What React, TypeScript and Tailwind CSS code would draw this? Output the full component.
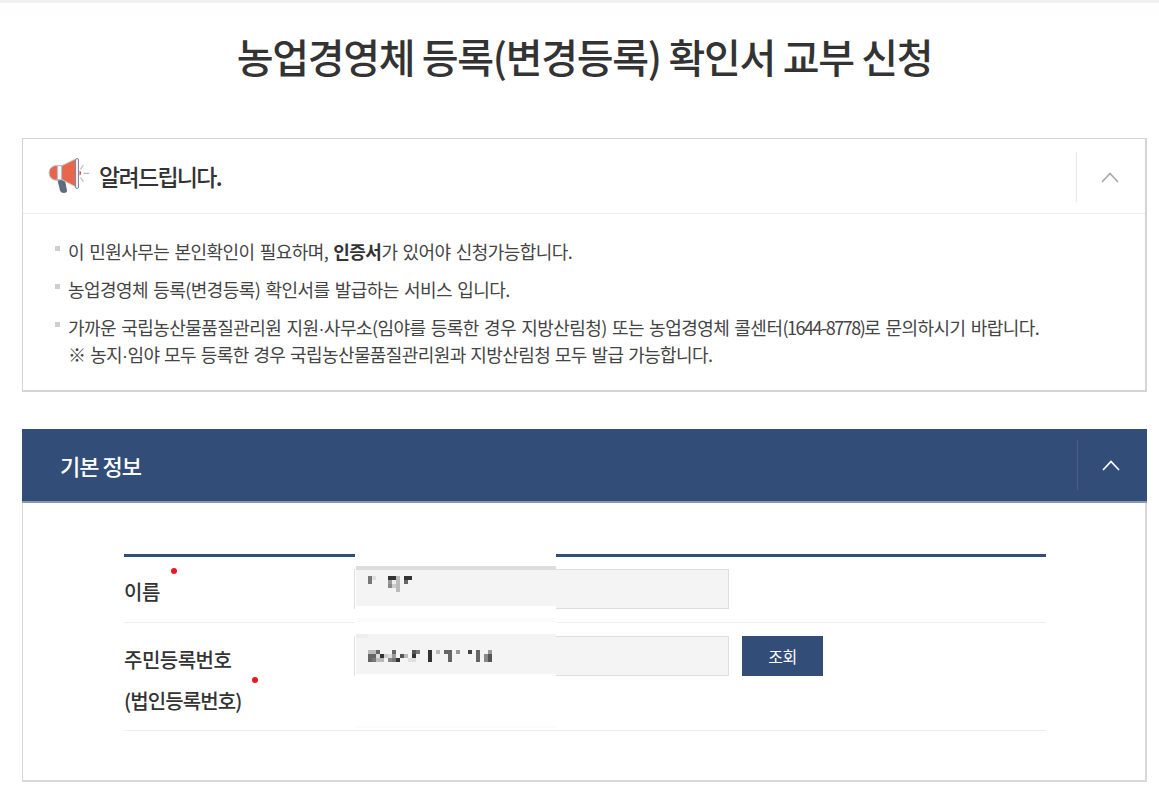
const kr = "font-['Noto_Sans_CJK_KR','Noto_Sans',sans-serif]";

// mosaic (blurred personal data): [x, y, colour], cells are 4px
const nameCells: [number, number, string][] = [
  [0, 0, "#777"], [0, 1, "#777"], [1, 0, "#e0e0e0"],
  [5, 0, "#333"], [6, 0, "#333"], [7, 0, "#bbb"], [7, 1, "#bbb"], [7, 2, "#bbb"], [7, 3, "#bbb"],
  [5, 1, "#999"], [6, 1, "#eee"], [5, 2, "#888"], [6, 2, "#ccc"],
  [9, 0, "#333"], [10, 0, "#333"], [9, 1, "#666"],
];

const idColumns: [number, (string | null)[]][] = [
  [0, ["#bbb", "#666", "#666"]],
  [1, ["#bbb", "#666", "#777"]],
  [2, ["#666", "#ddd", "#bbb"]],
  [3, [null, "#333", "#bbb"]],
  [4, [null, "#ccc", null]],
  [5, [null, "#ddd", "#888"]],
  [6, ["#666", "#999", "#777"]],
  [7, [null, null, "#333"]],
  [8, [null, "#555", null]],
  [9, [null, "#bbb", null]],
  [10, [null, null, "#e0e0e0"]],
  [11, ["#555", "#333", "#e0e0e0"]],
  [12, ["#777", null, null]],
  [15, ["#333", "#333", "#333"]],
  [17, ["#bbb", null, null]],
  [19, ["#666", null, null]],
  [20, ["#666", "#666", "#666"]],
  [22, ["#999", null, null]],
  [25, ["#444", null, null]],
  [27, ["#666", "#666", "#666"]],
  [29, [null, "#888", "#888"]],
  [30, ["#999", "#555", "#555"]],
];

const Megaphone = () => (
  <svg width="42" height="36" viewBox="0 0 42 36" className="shrink-0">
    <path d="M9.500 22h7.500l2 10.500c.3 1.600-1.200 2.500-3 2.500-2 0-3.400-.8-4-2.500z" fill="#5f6b7e" />
    <path d="M10 7.700h3.700L27.500 1v27.700L13.700 21.500 10 22a7.200 7.200 0 0 1-9-7.200 7.200 7.200 0 0 1 9-7.100z" fill="#e8674a" stroke="#c4cad8" strokeWidth="1" />
    <rect x="9.300" y="7.700" width="4.400" height="14" fill="#f6f7fa" stroke="#aab2c4" strokeWidth="0.8" />
    <rect x="27.500" y="0.500" width="3" height="30" rx="1.500" fill="#eef0f5" stroke="#7f8aa2" strokeWidth="1" />
    <path d="M31.500 12.800a2.400 2.400 0 0 1 0 4.600z" fill="#d8503f" />
    <path d="M32.500 11.500l2.800-4.300M35.500 15.300h5.800M32.500 19.500l2.800 4.200" stroke="#b4bccb" strokeWidth="1.200" fill="none" />
  </svg>
);

const Chevron = ({ color }: { color: string }) => (
  <svg width="20" height="12" viewBox="0 0 20 12" fill="none">
    <path d="M2 11l8-8.500 8 8.500" stroke={color} strokeWidth="1.700" />
  </svg>
);

const Dot = () => <span className="font-['Liberation_Sans',sans-serif] leading-[0]">·</span>;

const Bullet = ({ children, last }: { children: React.ReactNode; last?: boolean }) => (
  <li className={`relative pl-[45px] ${last ? "" : "mb-[11px]"}`}>
    <span className="absolute left-[32px] top-[8px] w-[5px] h-[5px] bg-[#cfcfcf]" />
    {children}
  </li>
);

const Required = ({ className }: { className: string }) => (
  <span className={`absolute w-[6px] h-[6px] rounded-full bg-[#f0141e] ${className}`} />
);

export default function App() {
  return (
    <div className={`${kr} w-[1159px] h-[798px] overflow-hidden bg-white text-[#333]`}>
      <div className="h-[3px] bg-[#f2f0f1]" />
      <h1 className="h-[135px] pt-[22px] pl-[10px] text-center text-[40px] leading-[62px] font-medium tracking-[-1.300px] text-[#333]">
        농업경영체 등록(변경등록) 확인서 교부 신청
      </h1>

      <div className="ml-[22px] mr-[12px]">
        <section className="h-[254px] border border-[#d5d5d5] border-b-2 border-r-2">
          <div className="h-[75px] border-b border-[#eaeaea] flex items-center pl-[25px]">
            <Megaphone />
            <h2 className="ml-[9px] text-[23px] tracking-[-1.700px] font-medium text-[#333]">알려드립니다.</h2>
            <div className="ml-auto mt-[2px] h-[50px] w-[69px] border-l border-[#e8e8e8] flex items-center justify-center pr-[3px]">
              <Chevron color="#a9a9a9" />
            </div>
          </div>
          <ul className="pt-[24px] text-[18px] leading-[27px] tracking-[-0.550px] [word-spacing:1.700px] text-[#444]">
            <Bullet>
              이 민원사무는 본인확인이 필요하며, <b className="font-bold text-[#333]">인증서</b>가 있어야 신청가능합니다.
            </Bullet>
            <Bullet>농업경영체 등록(변경등록) 확인서를 발급하는 서비스 입니다.</Bullet>
            <Bullet last>
              가까운 국립농산물품질관리원 지원<Dot />사무소(임야를 등록한 경우 지방산림청) 또는 농업경영체 콜센터
              <span className="tracking-[-1.500px]">(1644-8778)</span>로 문의하시기 바랍니다.
              <br />
              <span className="tracking-[-0.600px] [word-spacing:1.300px]">※ 농지<Dot />임야 모두 등록한 경우 국립농산물품질관리원과 지방산림청 모두 발급 가능합니다.</span>
            </Bullet>
          </ul>
        </section>

        <section className="mt-[37px]">
          <div className="h-[74px] bg-[#334d79] border-b-2 border-[#8b9ab3] flex items-center pl-[38px]">
            <h2 className="text-[22px] font-medium tracking-[-1px] text-white">기본 정보</h2>
            <div className="ml-auto h-[50px] w-[70px] border-l border-[#4a6088] flex items-center justify-center pr-[4px]">
              <Chevron color="#ffffff" />
            </div>
          </div>

          <div className="h-[279px] border-x-2 border-b-2 border-[#d8d8d8] border-l pl-[101px] pr-[99px] pt-[51px]">
            <div className="relative border-t-[3px] border-[#334d79]">
              <div className="h-[66px] border-b border-[#eeeeee] flex pt-[12px]">
                <div className="relative w-[230px] pt-[9px] text-[20px] leading-[27px] tracking-[-0.500px] font-medium">
                  이름
                  <Required className="left-[47px] top-[-1px]" />
                </div>
                <div className="w-[375px] h-[40px] bg-[#f4f4f4] border border-[#dedede]" />
              </div>
              <div className="h-[108px] border-b border-[#eeeeee] flex pt-[13px]">
                <div className="relative w-[230px] pt-[3px] text-[20px] leading-[41px] tracking-[-0.500px] font-medium">
                  주민등록번호
                  <br />
                  <span className="tracking-[-0.900px]">(법인등록번호)</span>
                  <Required className="left-[128px] top-[41px]" />
                </div>
                <div className="w-[375px] h-[40px] bg-[#f4f4f4] border border-[#dedede]" />
                <button className="ml-[13px] w-[81px] h-[40px] bg-[#334d79] text-white text-[16px] tracking-[-0.500px]">
                  조회
                </button>
              </div>

              {/* 개인정보 가림 처리 */}
              <div className="absolute left-[231px] top-[-3px] w-[201px] h-[174px] bg-white pl-[1px]">
                <div className="mt-[12px] h-[4px] bg-[#dcdcdc]" />
                <div className="h-[36px] bg-[#f4f4f4]" />
                <div className="mt-[12px] h-[4px] bg-[#fbfbfb]" />
                <div className="mt-[12px] h-[40px] bg-[#f4f4f4]">
                  <div className="w-[12px] h-[4px] bg-[#eeeeee]" />
                </div>
                <div className="mt-[52px] h-[2px] bg-[#fbfbfb]" />
                <svg width="201" height="174" className="absolute left-0 top-0" shapeRendering="crispEdges">
                  {nameCells.map(([x, y, c], i) => (
                    <rect key={i} x={13 + x * 4} y={22 + y * 4} width="4" height="4" fill={c} />
                  ))}
                  {idColumns.flatMap(([x, cells]) =>
                    cells.map((c, y) =>
                      c ? <rect key={`${x}-${y}`} x={13 + x * 4} y={96 + y * 4} width="4" height="4" fill={c} /> : null
                    )
                  )}
                </svg>
              </div>
            </div>
          </div>
        </section>
      </div>
    </div>
  );
}
